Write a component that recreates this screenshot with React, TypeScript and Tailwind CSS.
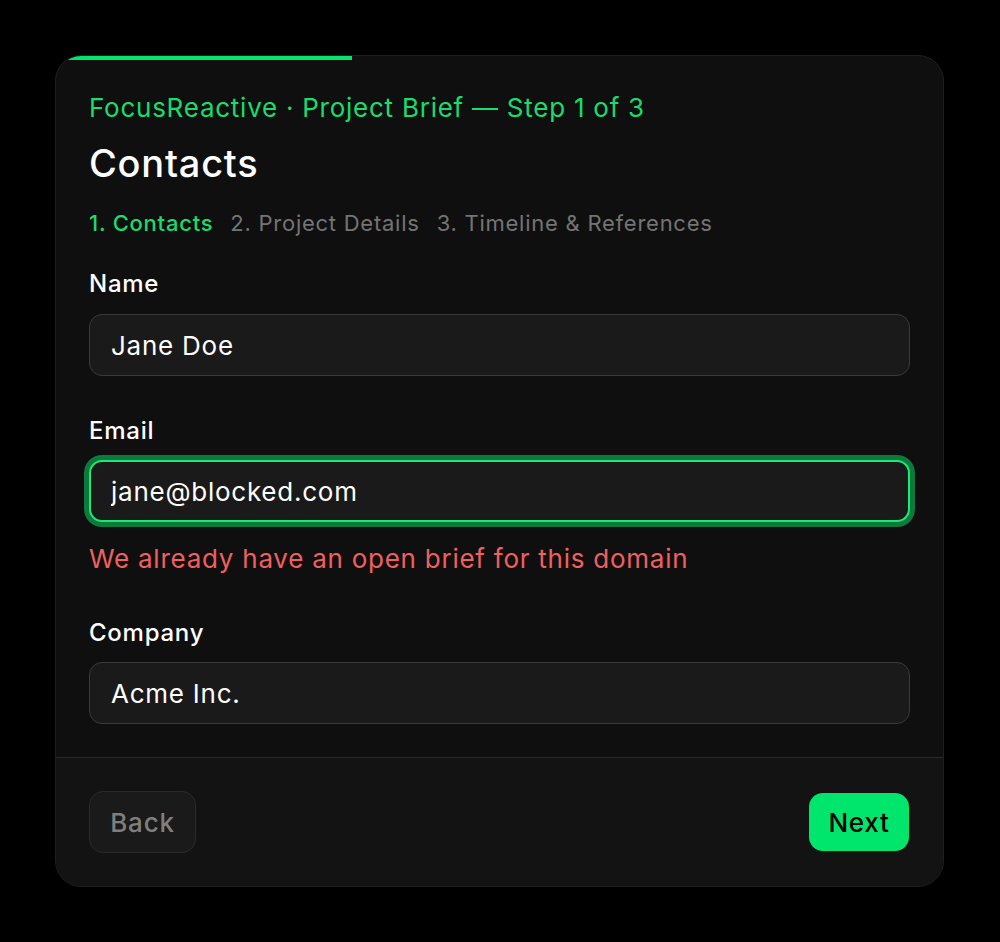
import { useState } from 'react';

const steps = ['1. Contacts', '2. Project Details', '3. Timeline & References'];

export default function App() {
  const [name, setName] = useState('Jane Doe');
  const [email, setEmail] = useState('jane@blocked.com');
  const [company, setCompany] = useState('Acme Inc.');

  return (
    <div className="min-h-[942px] bg-black pt-[55px] font-['Inter','Noto_Sans',sans-serif] tracking-[0.75px]">
      <div className="relative ml-[55px] w-[889px] overflow-hidden rounded-[26px] border border-[#1f1f1f] bg-[#0f0f0f]">
        {/* progress */}
        <div className="absolute left-0 top-0 h-[4px] w-1/3 bg-[#00e56b]" />

        <div className="px-[33px] pb-[33px] pt-[32px]">
          <p className="text-[26px] leading-[39px] text-[#19dc6c]">
            FocusReactive · Project Brief — Step 1 of 3
          </p>
          <h1 className="mt-[13px] text-[38px] font-medium leading-[46px] text-white">Contacts</h1>

          <div className="mt-[21px] flex gap-[17px] text-[22px] leading-[33px]">
            {steps.map((s, i) => (
              <span key={s} className={i === 0 ? 'font-medium text-[#19dc6c]' : 'text-[#747474]'}>
                {s}
              </span>
            ))}
          </div>

          <div className="mt-[26px]">
            <label className="block text-[24px] font-medium leading-[36px] text-white">Name</label>
            <input
              value={name}
              onChange={(e) => setName(e.target.value)}
              className="mt-[12px] h-[62px] w-full rounded-[13px] border border-[#3a3a3a] bg-[#1a1a1a] px-[21px] text-[26px] text-white outline-none"
            />
          </div>

          <div className="mt-[37px]">
            <label className="block text-[24px] font-medium leading-[36px] text-white">Email</label>
            <input
              value={email}
              onChange={(e) => setEmail(e.target.value)}
              className="mt-[11px] h-[62px] w-full rounded-[13px] border-2 border-[#1ee874] bg-[#1a1a1a] px-[20px] text-[26px] text-white shadow-[0_0_0_5px_#0b7a3c] outline-none"
            />
            <p className="mt-[17px] text-[26px] leading-[39px] text-[#f0605e]">
              We already have an open brief for this domain
            </p>
          </div>

          <div className="mt-[37px]">
            <label className="block text-[24px] font-medium leading-[36px] text-white">Company</label>
            <input
              value={company}
              onChange={(e) => setCompany(e.target.value)}
              className="mt-[11px] h-[62px] w-full rounded-[13px] border border-[#3a3a3a] bg-[#1a1a1a] px-[21px] text-[26px] text-white outline-none"
            />
          </div>
        </div>

        <div className="flex items-center justify-between border-t border-[#2a2a2a] bg-[#131313] px-[33px] py-[33px]">
          <button
            disabled
            className="h-[62px] w-[107px] rounded-[14px] border border-[#2a2a2a] bg-[#1a1a1a] text-[26px] font-medium text-[#7f7f7f]"
          >
            Back
          </button>
          <button className="mr-[1px] h-[58px] w-[100px] rounded-[14px] bg-[#00e56b] text-[26px] font-medium text-black">
            Next
          </button>
        </div>
      </div>
    </div>
  );
}
